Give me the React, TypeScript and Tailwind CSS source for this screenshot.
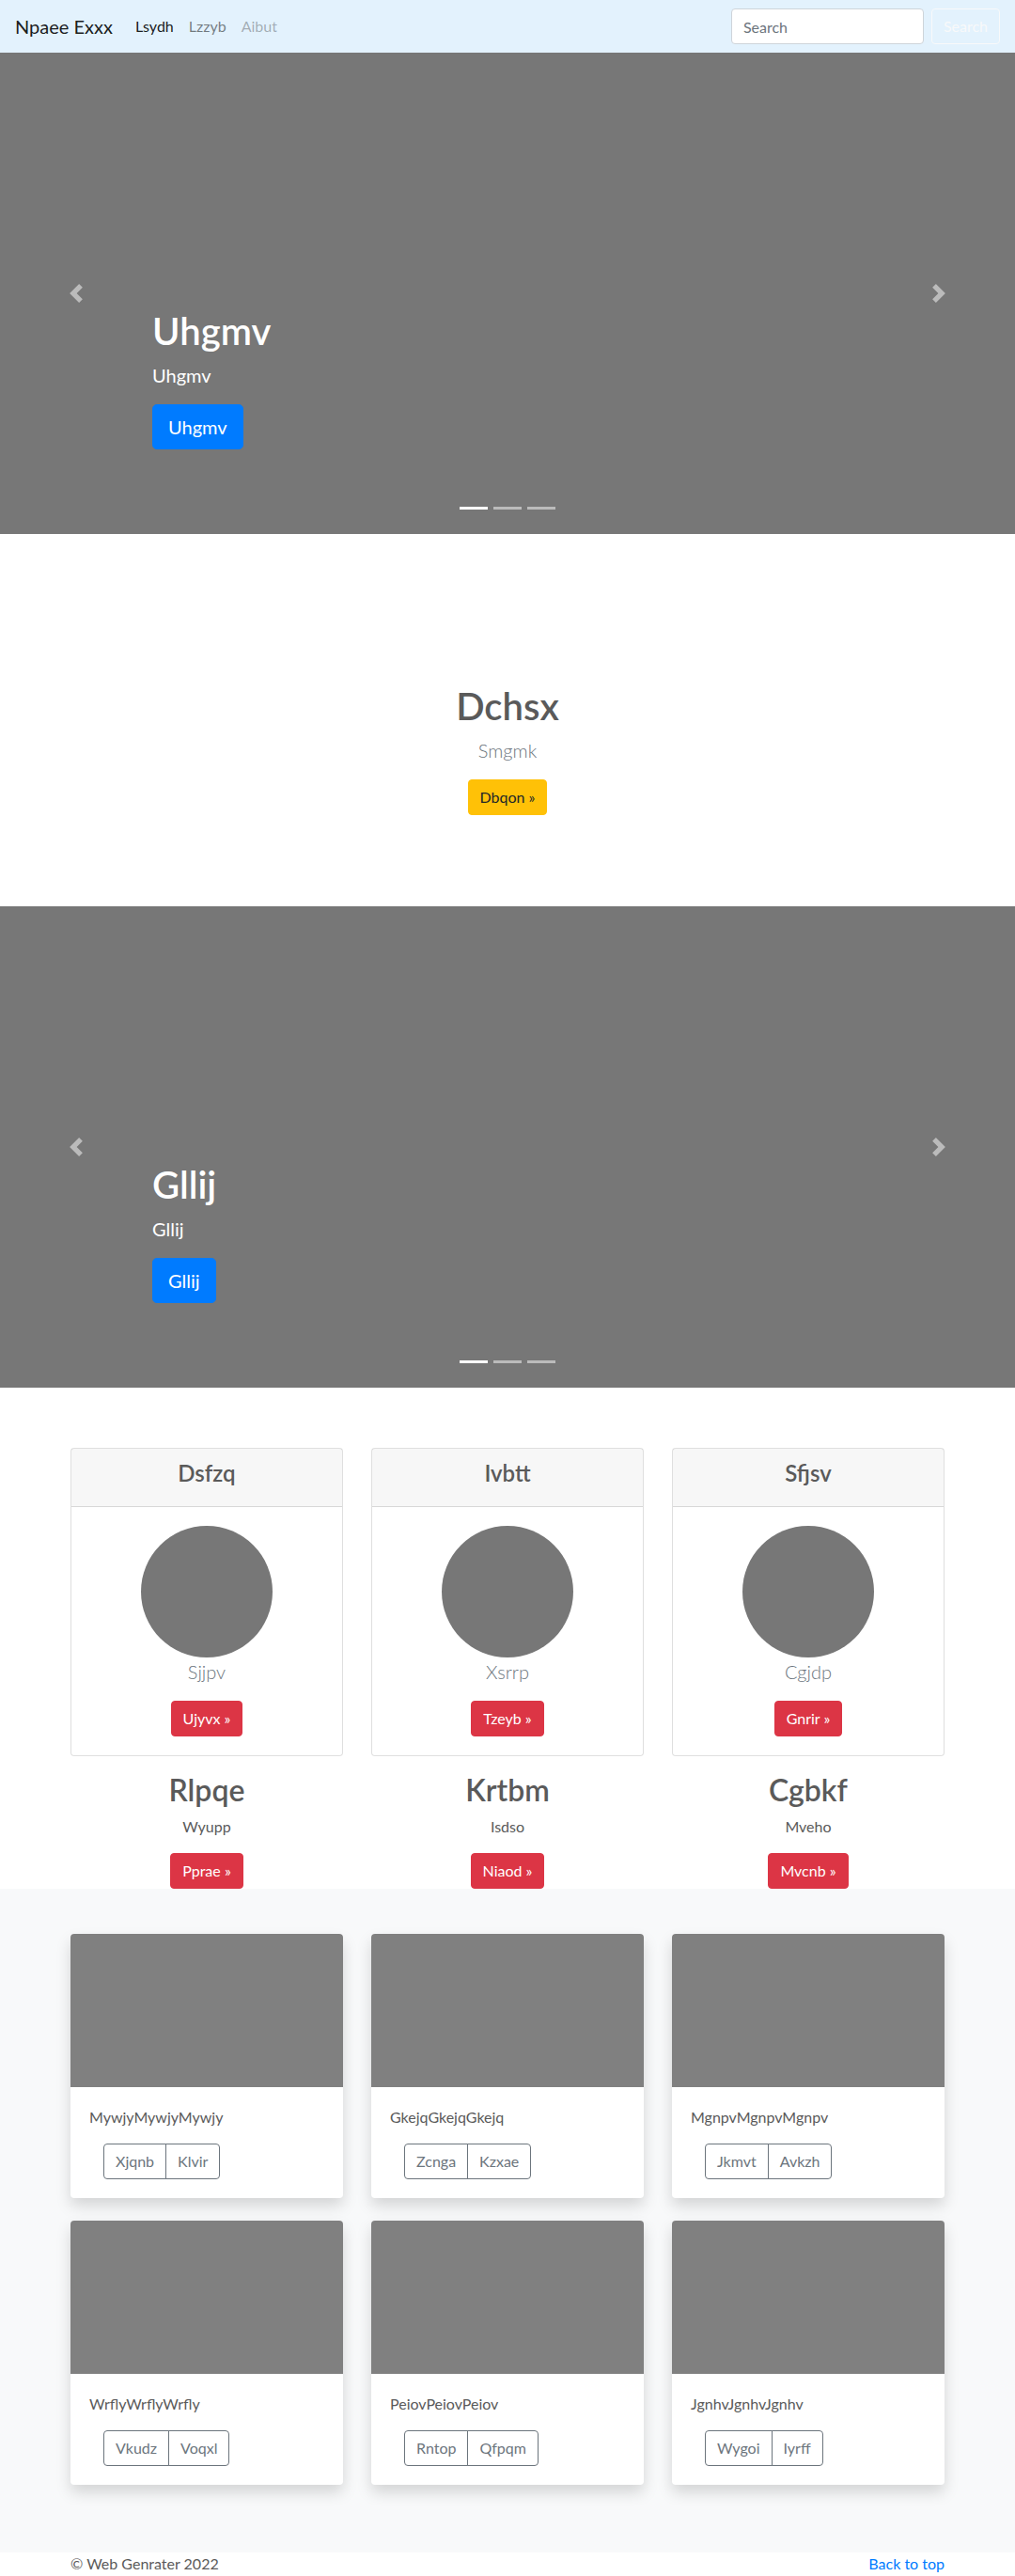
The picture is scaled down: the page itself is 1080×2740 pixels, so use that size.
import React from "react";

function Chevron({ dir }: { dir: "left" | "right" }) {
  return (
    <svg width="20" height="20" viewBox="0 0 8 8" fill="#fff">
      {dir === "left" ? (
        <path d="M5.25 0l-4 4 4 4 1.5-1.5L4.25 4l2.5-2.5L5.25 0z" />
      ) : (
        <path d="M2.75 0l-1.5 1.5L3.75 4l-2.5 2.5L2.75 8l4-4-4-4z" />
      )}
    </svg>
  );
}

function Carousel({ title }: { title: string }) {
  return (
    <div className="relative h-[512px] bg-[#777777] overflow-hidden">
      <div className="pl-[162px] pt-[272px]">
        <h1 className="text-[40px] leading-[1.2] font-semibold text-white mb-2">{title}</h1>
        <p className="text-[20px] leading-[1.5] text-white mb-4">{title}</p>
        <a className="inline-block bg-[#007bff] border border-[#007bff] text-white text-[20px] leading-[1.5] px-4 py-2 rounded-[4.8px]">
          {title}
        </a>
      </div>
      <div className="absolute top-0 bottom-0 left-0 w-[15%] flex items-center justify-center opacity-50">
        <Chevron dir="left" />
      </div>
      <div className="absolute top-0 bottom-0 right-0 w-[15%] flex items-center justify-center opacity-50">
        <Chevron dir="right" />
      </div>
      <div className="absolute left-0 right-0 bottom-[26px] flex justify-center gap-[6px]">
        <span className="block w-[30px] h-[3px] bg-white" />
        <span className="block w-[30px] h-[3px] bg-white opacity-50" />
        <span className="block w-[30px] h-[3px] bg-white opacity-50" />
      </div>
    </div>
  );
}

const deck = [
  { h: "Dsfzq", t: "Sjjpv", b: "Ujyvx", h2: "Rlpqe", p: "Wyupp", b2: "Pprae" },
  { h: "Ivbtt", t: "Xsrrp", b: "Tzeyb", h2: "Krtbm", p: "Isdso", b2: "Niaod" },
  { h: "Sfjsv", t: "Cgjdp", b: "Gnrir", h2: "Cgbkf", p: "Mveho", b2: "Mvcnb" },
];

const album = [
  { t: "MywjyMywjyMywjy", a: "Xjqnb", b: "Klvir" },
  { t: "GkejqGkejqGkejq", a: "Zcnga", b: "Kzxae" },
  { t: "MgnpvMgnpvMgnpv", a: "Jkmvt", b: "Avkzh" },
  { t: "WrflyWrflyWrfly", a: "Vkudz", b: "Voqxl" },
  { t: "PeiovPeiovPeiov", a: "Rntop", b: "Qfpqm" },
  { t: "JgnhvJgnhvJgnhv", a: "Wygoi", b: "Iyrff" },
];

export default function App() {
  return (
    <div className="font-['Lato',sans-serif] text-[16px] leading-[1.5] text-[#5a5a5a] bg-white">
      {/* Navbar */}
      <nav className="h-[56px] bg-[#e3f2fd] px-4 flex items-center">
        <span className="text-[20px] leading-[30px] text-black/90 mr-4">Npaee Exxx</span>
        <a className="px-2 text-black/90">Lsydh</a>
        <a className="px-2 text-black/50">Lzzyb</a>
        <a className="px-2 text-black/30">Aibut</a>
        <div className="ml-auto flex items-center">
          <input
            className="w-[205px] h-[38px] rounded-[4px] border border-[#ced4da] bg-white px-3 text-[16px] text-[#495057] placeholder:text-[#6c757d] mr-2 outline-none"
            placeholder="Search"
          />
          <button className="h-[38px] px-3 border border-[#f8f9fa] text-[#f8f9fa] rounded-[4px] text-[16px]">
            Search
          </button>
        </div>
      </nav>

      <Carousel title="Uhgmv" />

      {/* Jumbotron */}
      <section className="bg-white text-center pt-[159px] pb-[97px]">
        <h1 className="text-[40px] leading-[1.2] font-semibold mb-2 text-[#5a5a5a]">Dchsx</h1>
        <p className="text-[20px] leading-[1.5] font-light text-[#6c757d] mb-4">Smgmk</p>
        <a className="inline-block bg-[#ffc107] border border-[#ffc107] text-[#212529] px-3 py-1.5 leading-[1.5] rounded-[4px]">
          Dbqon &raquo;
        </a>
      </section>

      <Carousel title="Gllij" />

      {/* Card deck */}
      <div className="w-[930px] mx-auto mt-[64px] grid grid-cols-3 gap-x-[30px] text-center">
        {deck.map((d) => (
          <div key={d.h}>
            <div className="border border-black/[0.125] rounded-[4px] bg-white">
              <div className="bg-black/[0.03] border-b border-black/[0.125] px-5 py-3">
                <h4 className="text-[24px] leading-[1.2] font-semibold mb-2 text-[#5a5a5a]">{d.h}</h4>
              </div>
              <div className="p-5">
                <div className="w-[140px] h-[140px] rounded-full bg-[#777777] mx-auto" />
                <p className="text-[20px] leading-[1.5] font-light text-[#6c757d] mb-4">{d.t}</p>
                <a className="inline-block bg-[#dc3545] border border-[#dc3545] text-white px-3 py-1.5 leading-[1.5] rounded-[4px]">
                  {d.b} &raquo;
                </a>
              </div>
            </div>
            <h2 className="mt-[17px] text-[32px] leading-[1.2] font-semibold mb-2 text-[#5a5a5a]">{d.h2}</h2>
            <p className="mb-4">{d.p}</p>
            <a className="inline-block bg-[#dc3545] border border-[#dc3545] text-white px-3 py-1.5 leading-[1.5] rounded-[4px]">
              {d.b2} &raquo;
            </a>
          </div>
        ))}
      </div>

      {/* Album */}
      <section className="bg-[#f8f9fa] py-12">
        <div className="w-[930px] mx-auto grid grid-cols-3 gap-x-[30px]">
          {album.map((c) => (
            <div
              key={c.t}
              className="bg-white rounded-[4px] overflow-hidden shadow-[0_8px_16px_rgba(0,0,0,0.15)] mb-6"
            >
              <div className="h-[163px] bg-[#808080]" />
              <div className="p-5">
                <p className="mb-4 text-[#5a5a5a]">{c.t}</p>
                <div className="inline-flex ml-[15px]">
                  <button className="border border-[#6c757d] text-[#6c757d] px-3 py-1.5 leading-[1.5] rounded-l-[4px]">
                    {c.a}
                  </button>
                  <button className="border border-[#6c757d] text-[#6c757d] px-3 py-1.5 leading-[1.5] rounded-r-[4px] -ml-px">
                    {c.b}
                  </button>
                </div>
              </div>
            </div>
          ))}
        </div>
      </section>

      {/* Footer */}
      <footer className="w-[930px] mx-auto flex justify-between pb-12">
        <p>&copy; Web Genrater 2022</p>
        <a className="text-[#007bff]">Back to top</a>
      </footer>
    </div>
  );
}
